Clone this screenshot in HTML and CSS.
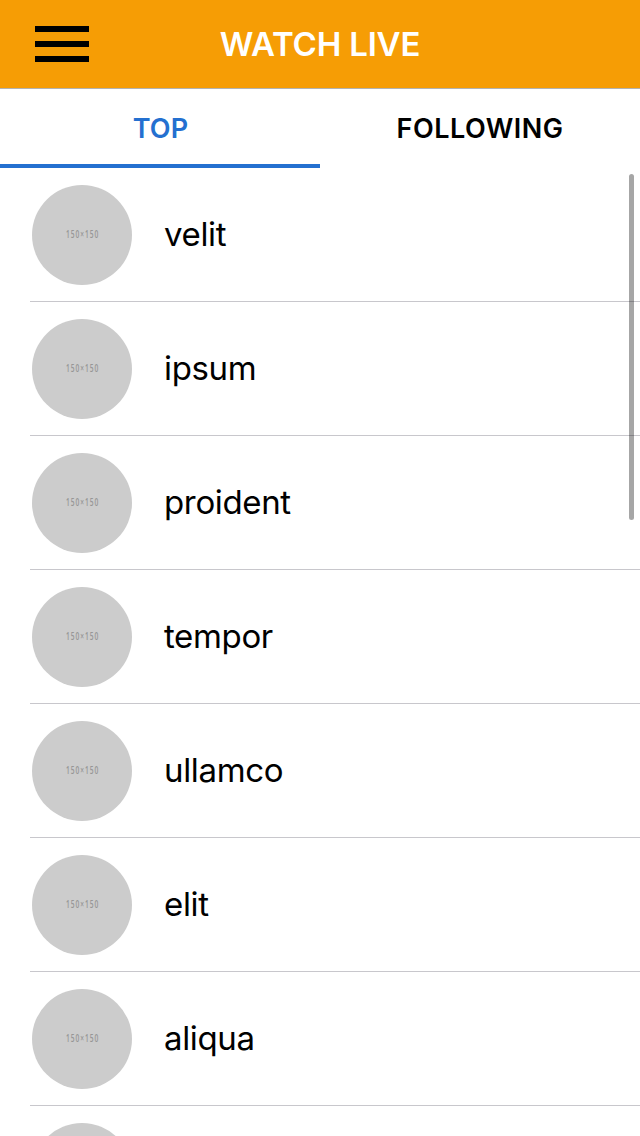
FILE: index.html
```html
<!DOCTYPE html>
<html lang="en">
<head>
<meta charset="utf-8">
<title>Watch Live</title>
<link rel="stylesheet" href="styles.css">
</head>
<body>
<header class="navbar">
  <button class="menu" aria-label="Menu"><svg width="54" height="36" viewBox="0 0 54 36"><path d="M0 0h54v6H0zM0 15h54v6H0zM0 30h54v6H0z"/></svg></button>
  <h1 class="title">WATCH LIVE</h1>
</header>
<nav class="tabs">
  <a class="tab active"><span class="tab-top">TOP</span></a>
  <a class="tab"><span>FOLLOWING</span></a>
</nav>
<main class="list">
  <div class="row"><div class="avatar"><span class="size">150×150</span></div><div class="name">velit</div></div>
  <div class="row"><div class="avatar"><span class="size">150×150</span></div><div class="name">ipsum</div></div>
  <div class="row"><div class="avatar"><span class="size">150×150</span></div><div class="name">proident</div></div>
  <div class="row"><div class="avatar"><span class="size">150×150</span></div><div class="name">tempor</div></div>
  <div class="row"><div class="avatar"><span class="size">150×150</span></div><div class="name">ullamco</div></div>
  <div class="row"><div class="avatar"><span class="size">150×150</span></div><div class="name">elit</div></div>
  <div class="row"><div class="avatar"><span class="size">150×150</span></div><div class="name">aliqua</div></div>
  <div class="row"><div class="avatar"></div></div>
  <div class="scrollbar"></div>
</main>
</body>
</html>
```

FILE: styles.css
```css
* { box-sizing: border-box; }
body {
  margin: 0;
  height: 1136px;
  display: flex;
  flex-direction: column;
  overflow: hidden;
  background: #fff;
  color: #000;
  font-family: Inter, "Liberation Sans", sans-serif;
}
.navbar {
  flex: none;
  height: 89px;
  display: grid;
  grid-template-columns: 1fr auto 1fr;
  align-items: center;
  padding: 0 35px;
  background: #f69d05;
  border-bottom: 1px solid #b2b2b2;
}
.menu { padding: 0; border: 0; background: none; width: 54px; height: 36px; }
.menu svg { display: block; }
.title {
  margin: 0;
  color: #fff;
  font-size: 33px;
  font-weight: 600;
  line-height: 40px;
  letter-spacing: -0.2px;
  white-space: nowrap;
}
.tabs { flex: none; height: 79px; display: flex; }
.tab {
  flex: 1;
  display: flex;
  align-items: center;
  justify-content: center;
  padding-top: 4px;
  border-bottom: 4px solid transparent;
  font-size: 27px;
  font-weight: 600;
  line-height: 34px;
  letter-spacing: 0.5px;
}
.tab.active { color: #2470d0; border-color: #2470d0; }
.tab-top { padding-left: 1px; letter-spacing: 0.1px; }
.list { position: relative; flex: 1; min-height: 0; overflow: hidden; }
.row {
  height: 134px;
  margin-left: 30px;
  padding-left: 2px;
  display: flex;
  align-items: center;
  gap: 32px;
  border-bottom: 1px solid #c8c7cc;
}
.avatar {
  width: 100px;
  height: 100px;
  border-radius: 50%;
  background: #ccc;
  color: #969696;
  display: flex;
  align-items: center;
  justify-content: center;
}
.size {
  font-family: "Open Sans", sans-serif;
  font-size: 11px;
  font-weight: 600;
  line-height: 14px;
  letter-spacing: 1.6px;
  margin-right: -1.6px;
  padding-bottom: 1px;
  transform: scaleX(0.6);
}
.name {
  padding-bottom: 1px;
  font-size: 33px;
  line-height: 40px;
  letter-spacing: -0.35px;
}
.scrollbar {
  position: absolute;
  top: 6px;
  right: 6px;
  width: 5px;
  height: 346px;
  border-radius: 3px;
  background: rgba(0, 0, 0, 0.35);
}
```
